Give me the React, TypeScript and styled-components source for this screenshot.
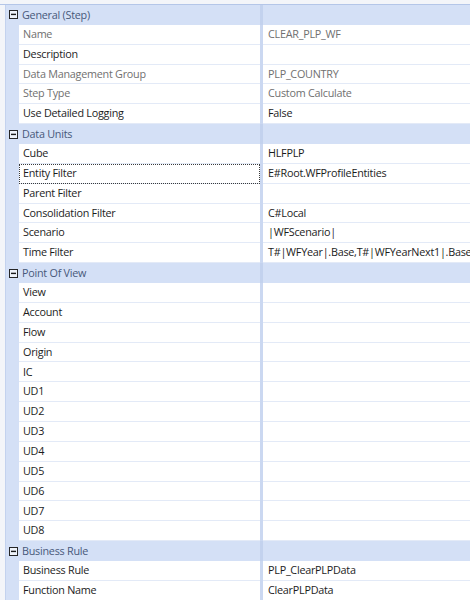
import styled, { createGlobalStyle } from "styled-components";

const GlobalStyle = createGlobalStyle`
  html, body {
    margin: 0;
    padding: 0;
    background: #ffffff;
  }
  body {
    font-family: "Open Sans", "Noto Sans", sans-serif;
  }
`;

interface Prop {
  label: string;
  value?: string;
  disabled?: boolean;
  focused?: boolean;
}

interface Category {
  title: string;
  props: Prop[];
}

const categories: Category[] = [
  {
    title: "General (Step)",
    props: [
      { label: "Name", value: "CLEAR_PLP_WF", disabled: true },
      { label: "Description" },
      { label: "Data Management Group", value: "PLP_COUNTRY", disabled: true },
      { label: "Step Type", value: "Custom Calculate", disabled: true },
      { label: "Use Detailed Logging", value: "False" },
    ],
  },
  {
    title: "Data Units",
    props: [
      { label: "Cube", value: "HLFPLP" },
      { label: "Entity Filter", value: "E#Root.WFProfileEntities", focused: true },
      { label: "Parent Filter" },
      { label: "Consolidation Filter", value: "C#Local" },
      { label: "Scenario", value: "|WFScenario|" },
      { label: "Time Filter", value: "T#|WFYear|.Base,T#|WFYearNext1|.Base" },
    ],
  },
  {
    title: "Point Of View",
    props: [
      { label: "View" },
      { label: "Account" },
      { label: "Flow" },
      { label: "Origin" },
      { label: "IC" },
      { label: "UD1" },
      { label: "UD2" },
      { label: "UD3" },
      { label: "UD4" },
      { label: "UD5" },
      { label: "UD6" },
      { label: "UD7" },
      { label: "UD8" },
    ],
  },
  {
    title: "Business Rule",
    props: [
      { label: "Business Rule", value: "PLP_ClearPLPData" },
      { label: "Function Name", value: "ClearPLPData" },
    ],
  },
];

const CollapseIcon = () => (
  <svg width="9" height="9" viewBox="0 0 9 9">
    <rect x="0.5" y="0.5" width="8" height="8" fill="#eef2f9" stroke="#262626" />
    <rect x="2" y="3.7" width="5" height="1.4" fill="#1a1a1a" />
  </svg>
);

const App = () => {
  return (
    <>
      <GlobalStyle />
      <Page>
        <TopStrip />
        <Body>
          <SideStrip />
          <Grid>
            {categories.map((cat) => (
              <Section key={cat.title}>
                <CategoryRow>
                  <CategoryMargin>
                    <CollapseIcon />
                  </CategoryMargin>
                  <CategoryTitle>{cat.title}</CategoryTitle>
                  <Split $header />
                  <CategoryFill />
                </CategoryRow>
                {cat.props.map((p) => (
                  <PropRow key={p.label}>
                    <Margin />
                    <LabelCell $disabled={p.disabled} $focused={p.focused}>
                      {p.label}
                    </LabelCell>
                    <Split />
                    <ValueCell $disabled={p.disabled}>{p.value}</ValueCell>
                  </PropRow>
                ))}
              </Section>
            ))}
          </Grid>
        </Body>
      </Page>
    </>
  );
};

const ROW = "19.86px";

const Page = styled.div`
  width: 470px;
  height: 600px;
  overflow: hidden;
  background: #ffffff;
`;

const TopStrip = styled.div`
  height: 4px;
  background: #f3f5f9;
  border-bottom: 1px solid #b4c6e8;
`;

const Body = styled.div`
  display: flex;
`;

const SideStrip = styled.div`
  width: 5px;
  flex-shrink: 0;
  background: #f3f5f9;
  border-right: 1px solid #c3d2ee;
`;

const Grid = styled.div`
  flex: 1;
  display: flex;
  flex-direction: column;
`;

const Section = styled.div`
  display: flex;
  flex-direction: column;
`;

const rowBase = `
  display: grid;
  grid-template-columns: 13px 241px 3px 1fr;
  height: ${ROW};
  box-sizing: border-box;
  font-size: 10.8px;
  letter-spacing: -0.25px;
  line-height: 1;
`;

const CategoryRow = styled.div`
  ${rowBase}
  background: #d4e0f6;
`;

const CategoryMargin = styled.div`
  display: flex;
  align-items: center;
  padding-left: 3px;
`;

const CategoryTitle = styled.div`
  display: flex;
  align-items: center;
  padding-left: 3px;
  color: #47587a;
`;

const CategoryFill = styled.div``;

const PropRow = styled.div`
  ${rowBase}
`;

const Margin = styled.div`
  background: #d4e0f6;
`;

const Split = styled.div<{ $header?: boolean }>`
  background: ${(p) => (p.$header ? "#c3d2ee" : "#cbd8f1")};
`;

const LabelCell = styled.div<{ $disabled?: boolean; $focused?: boolean }>`
  display: flex;
  align-items: center;
  padding-left: 4px;
  box-sizing: border-box;
  background: #ffffff;
  border-bottom: 1px solid #e3eaf7;
  color: ${(p) => (p.$disabled ? "#707070" : "#1c1c1c")};
  white-space: nowrap;
  ${(p) =>
    p.$focused &&
    `
    outline: 1px dotted #3a3a3a;
    outline-offset: -1px;
  `}
`;

const ValueCell = styled.div<{ $disabled?: boolean }>`
  display: flex;
  align-items: center;
  padding-left: 5px;
  box-sizing: border-box;
  background: #ffffff;
  border-bottom: 1px solid #e3eaf7;
  color: ${(p) => (p.$disabled ? "#707070" : "#1c1c1c")};
  white-space: nowrap;
  overflow: hidden;
`;

export default App;
